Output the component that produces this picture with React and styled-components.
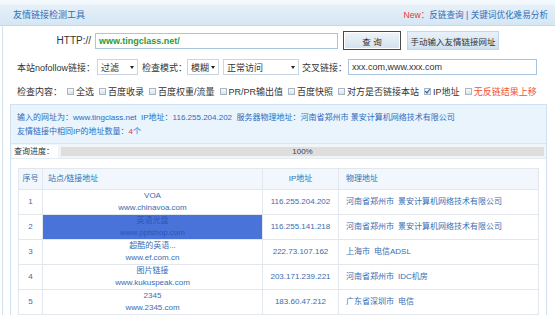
import React from 'react';
import styled, { createGlobalStyle } from 'styled-components';

const Global = createGlobalStyle`
  html, body { margin: 0; padding: 0; background: #fff; }
  body {
    width: 555px;
    height: 315px;
    overflow: hidden;
    font-family: "Liberation Sans", "Noto Sans CJK SC", sans-serif;
    color: #333;
  }
  * { box-sizing: border-box; }
`;

const Page = styled.div`
  width: 555px;
  height: 315px;
  display: flex;
  flex-direction: column;
`;

const TitleBar = styled.div`
  height: 26px;
  flex: none;
  display: flex;
  align-items: center;
  justify-content: space-between;
  padding: 5px 7px 0 13px;
  background: linear-gradient(#f3f8fc 0, #f3f8fc 4px, #e6f0f9 5px, #d5e6f3 100%);
  border-bottom: 1px solid #c6d9ea;
`;

const Title = styled.div`
  font-size: 9px;
  line-height: 12px;
  color: #2d6fba;
`;

const TopLinks = styled.div`
  font-size: 8.6px;
  line-height: 12px;
  color: #2d6fba;
  white-space: pre;
`;

const NewTag = styled.span`
  color: #e8372f;
`;

const Body = styled.div`
  flex: 1;
  margin-left: 2px;
  border-left: 1px solid #d3e1ed;
  padding-top: 5px;
  display: flex;
  flex-direction: column;
  min-height: 0;
`;

const UrlRow = styled.div`
  display: flex;
  align-items: center;
  height: 19px;
`;

const UrlLabel = styled.div`
  width: 88px;
  text-align: right;
  font-size: 10px;
  color: #333;
  margin-right: 4px;
`;

const TextBox = styled.div`
  width: ${p => p.$w}px;
  height: 16px;
  border: 1px solid #aac6de;
  display: flex;
  align-items: center;
  padding-left: ${p => p.$pad || 3}px;
  font-size: 9px;
  color: ${p => p.$green ? '#2e9a2e' : '#333'};
  font-weight: ${p => p.$green ? 'bold' : 'normal'};
  background: #fff;
  white-space: nowrap;
`;

const Button = styled.div`
  margin-left: ${p => p.$ml}px;
  width: ${p => p.$w}px;
  height: 19px;
  display: flex;
  align-items: center;
  justify-content: center;
  font-size: 8.5px;
  color: #333;
  white-space: pre;
  border: 1px solid ${p => p.$primary ? '#4a4a4a' : '#c2d7e8'};
  box-shadow: ${p => p.$primary ? 'inset 0 0 0 1px #fff' : 'none'};
  background: ${p => p.$primary ? 'linear-gradient(#eef4f9, #d3e2ef)' : 'linear-gradient(#e8f1f9, #cfe1ef)'};
`;

const OptionRow = styled.div`
  margin-top: 9px;
  display: flex;
  align-items: center;
  height: 16px;
  padding-left: 14px;
  font-size: 9px;
  color: #333;
  white-space: nowrap;
`;

const Label = styled.span`
  margin-left: ${p => p.$ml || 0}px;
  margin-right: ${p => p.$mr || 0}px;
`;

const Select = styled.div`
  margin-left: ${p => p.$ml || 0}px;
  width: ${p => p.$w}px;
  height: 16px;
  border: 1px solid #c9d6e1;
  display: flex;
  align-items: center;
  justify-content: space-between;
  padding: 0 3px 0 3px;
  background: #fff;
  font-size: 9px;
  color: #333;
  &::after {
    content: "";
    width: 0;
    height: 0;
    border-left: 2.5px solid transparent;
    border-right: 2.5px solid transparent;
    border-top: 3px solid #222;
  }
`;

const CheckRow = styled.div`
  margin-top: 8px;
  display: flex;
  align-items: center;
  height: 16px;
  padding-left: 14px;
  font-size: 9px;
  color: #333;
  white-space: nowrap;
  gap: 5px;
`;

const CheckItem = styled.span`
  display: flex;
  align-items: center;
  gap: 2px;
  color: ${p => p.$red ? '#f0552f' : '#333'};
`;

const Box = styled.span`
  width: 7px;
  height: 7px;
  border: 1px solid #a9b6c3;
  background: linear-gradient(#fafafa, #dcdfe3);
  position: relative;
  flex: none;
  ${p => p.$on && `
    &::after {
      content: "";
      position: absolute;
      left: 1px;
      top: -0.5px;
      width: 2px;
      height: 4px;
      border-right: 1.2px solid #2c4ea8;
      border-bottom: 1.2px solid #2c4ea8;
      transform: rotate(40deg);
    }
  `}
`;

const Panel = styled.div`
  margin: 5px 8px 0 7px;
  border: 1px solid #d0e2f1;
  border-bottom: none;
  flex: 1;
  display: flex;
  flex-direction: column;
  min-height: 0;
`;

const Info = styled.div`
  background: #eaf4fc;
  padding: 6px 0 4px 6px;
  font-size: 8px;
  line-height: 14px;
  color: #2a6cc0;
  white-space: pre;
`;

const Red = styled.span`
  color: #e8372f;
`;

const ProgressRow = styled.div`
  display: flex;
  align-items: center;
  height: 16px;
  background: #eef5fb;
  border-top: 1px solid #d5e5f2;
  border-bottom: 1px solid #e3edf6;
  padding: 0 1px;
  gap: 2px;
`;

const ProgressLabel = styled.div`
  width: 46px;
  height: 13px;
  background: #fff;
  font-size: 8px;
  line-height: 13px;
  padding-left: 2px;
  color: #333;
`;

const Bar = styled.div`
  flex: 1;
  height: 11px;
  background: #dedede;
  border: 1px solid #f4f4f4;
  font-size: 8px;
  line-height: 9px;
  text-align: center;
  color: #444;
`;

const TableArea = styled.div`
  padding: 9px 6px 0 7px;
  background: #fff;
`;

const Table = styled.table`
  width: 520px;
  border-collapse: collapse;
  table-layout: fixed;
  font-size: 8px;
  color: #3a6db0;
  td, th {
    border: 1px solid #e2e7ed;
    padding: 0;
  }
`;

const Th = styled.th`
  height: 21px;
  background: #f1f7fc;
  font-weight: normal;
  text-align: ${p => p.$left ? 'left' : 'center'};
  padding-left: ${p => p.$pl || 0}px !important;
  line-height: 12px;
`;

const Td = styled.td`
  height: 25px;
  text-align: ${p => p.$left ? 'left' : 'center'};
  padding-left: ${p => p.$pl || 0}px !important;
  line-height: 12px;
  background: ${p => p.$hl ? '#4a73d9' : '#fff'};
  color: ${p => p.$hl ? '#2a57b6' : '#3a6db0'};
  white-space: nowrap;
`;

const Isp = styled.span`
  margin-left: 4px;
`;

const rows = [
  { n: 1, name: 'VOA', url: 'www.chinavoa.com', ip: '116.255.204.202', region: '河南省郑州市', isp: '景安计算机网络技术有限公司' },
  { n: 2, name: '英语光盘', url: 'www.pptshop.com', ip: '116.255.141.218', region: '河南省郑州市', isp: '景安计算机网络技术有限公司', hl: true },
  { n: 3, name: '超酷的英语...', url: 'www.ef.com.cn', ip: '222.73.107.162', region: '上海市', isp: '电信ADSL' },
  { n: 4, name: '图片链接', url: 'www.kukuspeak.com', ip: '203.171.239.221', region: '河南省郑州市', isp: 'IDC机房' },
  { n: 5, name: '2345', url: 'www.2345.com', ip: '183.60.47.212', region: '广东省深圳市', isp: '电信' },
];

const checks = [
  { t: '全选' },
  { t: '百度收录' },
  { t: '百度权重/流量' },
  { t: 'PR/PR输出值' },
  { t: '百度快照' },
  { t: '对方是否链接本站' },
  { t: 'IP地址', on: true },
  { t: '无反链结果上移', red: true },
];

export default function App() {
  return (
    <Page>
      <Global />
      <TitleBar>
        <Title>友情链接检测工具</Title>
        <TopLinks><NewTag>New：</NewTag>反链查询 | 关键词优化难易分析</TopLinks>
      </TitleBar>
      <Body>
        <UrlRow>
          <UrlLabel>HTTP://</UrlLabel>
          <TextBox $w={243} $green>www.tingclass.net/</TextBox>
          <Button $ml={5} $w={58} $primary>{'查 询'}</Button>
          <Button $ml={6} $w={92}>手动输入友情链接网址</Button>
        </UrlRow>
        <OptionRow>
          <Label>本站nofollow链接：</Label>
          <Select $ml={2} $w={41}>过滤</Select>
          <Label $ml={4}>检查模式：</Label>
          <Select $w={32}>模糊</Select>
          <Select $ml={4} $w={76}>正常访问</Select>
          <Label $ml={3} $mr={1}>交叉链接：</Label>
          <TextBox $w={189} $pad={3}>xxx.com,www.xxx.com</TextBox>
        </OptionRow>
        <CheckRow>
          <Label>检查内容：</Label>
          {checks.map(c => (
            <CheckItem key={c.t} $red={c.red}>
              <Box $on={c.on} />
              {c.t}
            </CheckItem>
          ))}
        </CheckRow>
        <Panel>
          <Info>
            {'输入的网址为：www.tingclass.net  IP地址：116.255.204.202  服务器物理地址：河南省郑州市 景安计算机网络技术有限公司'}
            {'\n'}友情链接中相同IP的地址数量：<Red>4</Red>个
          </Info>
          <ProgressRow>
            <ProgressLabel>查询进度：</ProgressLabel>
            <Bar>100%</Bar>
          </ProgressRow>
          <TableArea>
            <Table>
              <colgroup>
                <col style={{ width: 24 }} />
                <col style={{ width: 220 }} />
                <col style={{ width: 76 }} />
                <col style={{ width: 200 }} />
              </colgroup>
              <thead>
                <tr>
                  <Th>序号</Th>
                  <Th $left $pl={5}>站点/链接地址</Th>
                  <Th>IP地址</Th>
                  <Th $left $pl={7}>物理地址</Th>
                </tr>
              </thead>
              <tbody>
                {rows.map(r => (
                  <tr key={r.n}>
                    <Td>{r.n}</Td>
                    <Td $hl={r.hl}>{r.name}<br />{r.url}</Td>
                    <Td>{r.ip}</Td>
                    <Td $left $pl={7}>{r.region}<Isp>{r.isp}</Isp></Td>
                  </tr>
                ))}
              </tbody>
            </Table>
          </TableArea>
        </Panel>
      </Body>
    </Page>
  );
}
